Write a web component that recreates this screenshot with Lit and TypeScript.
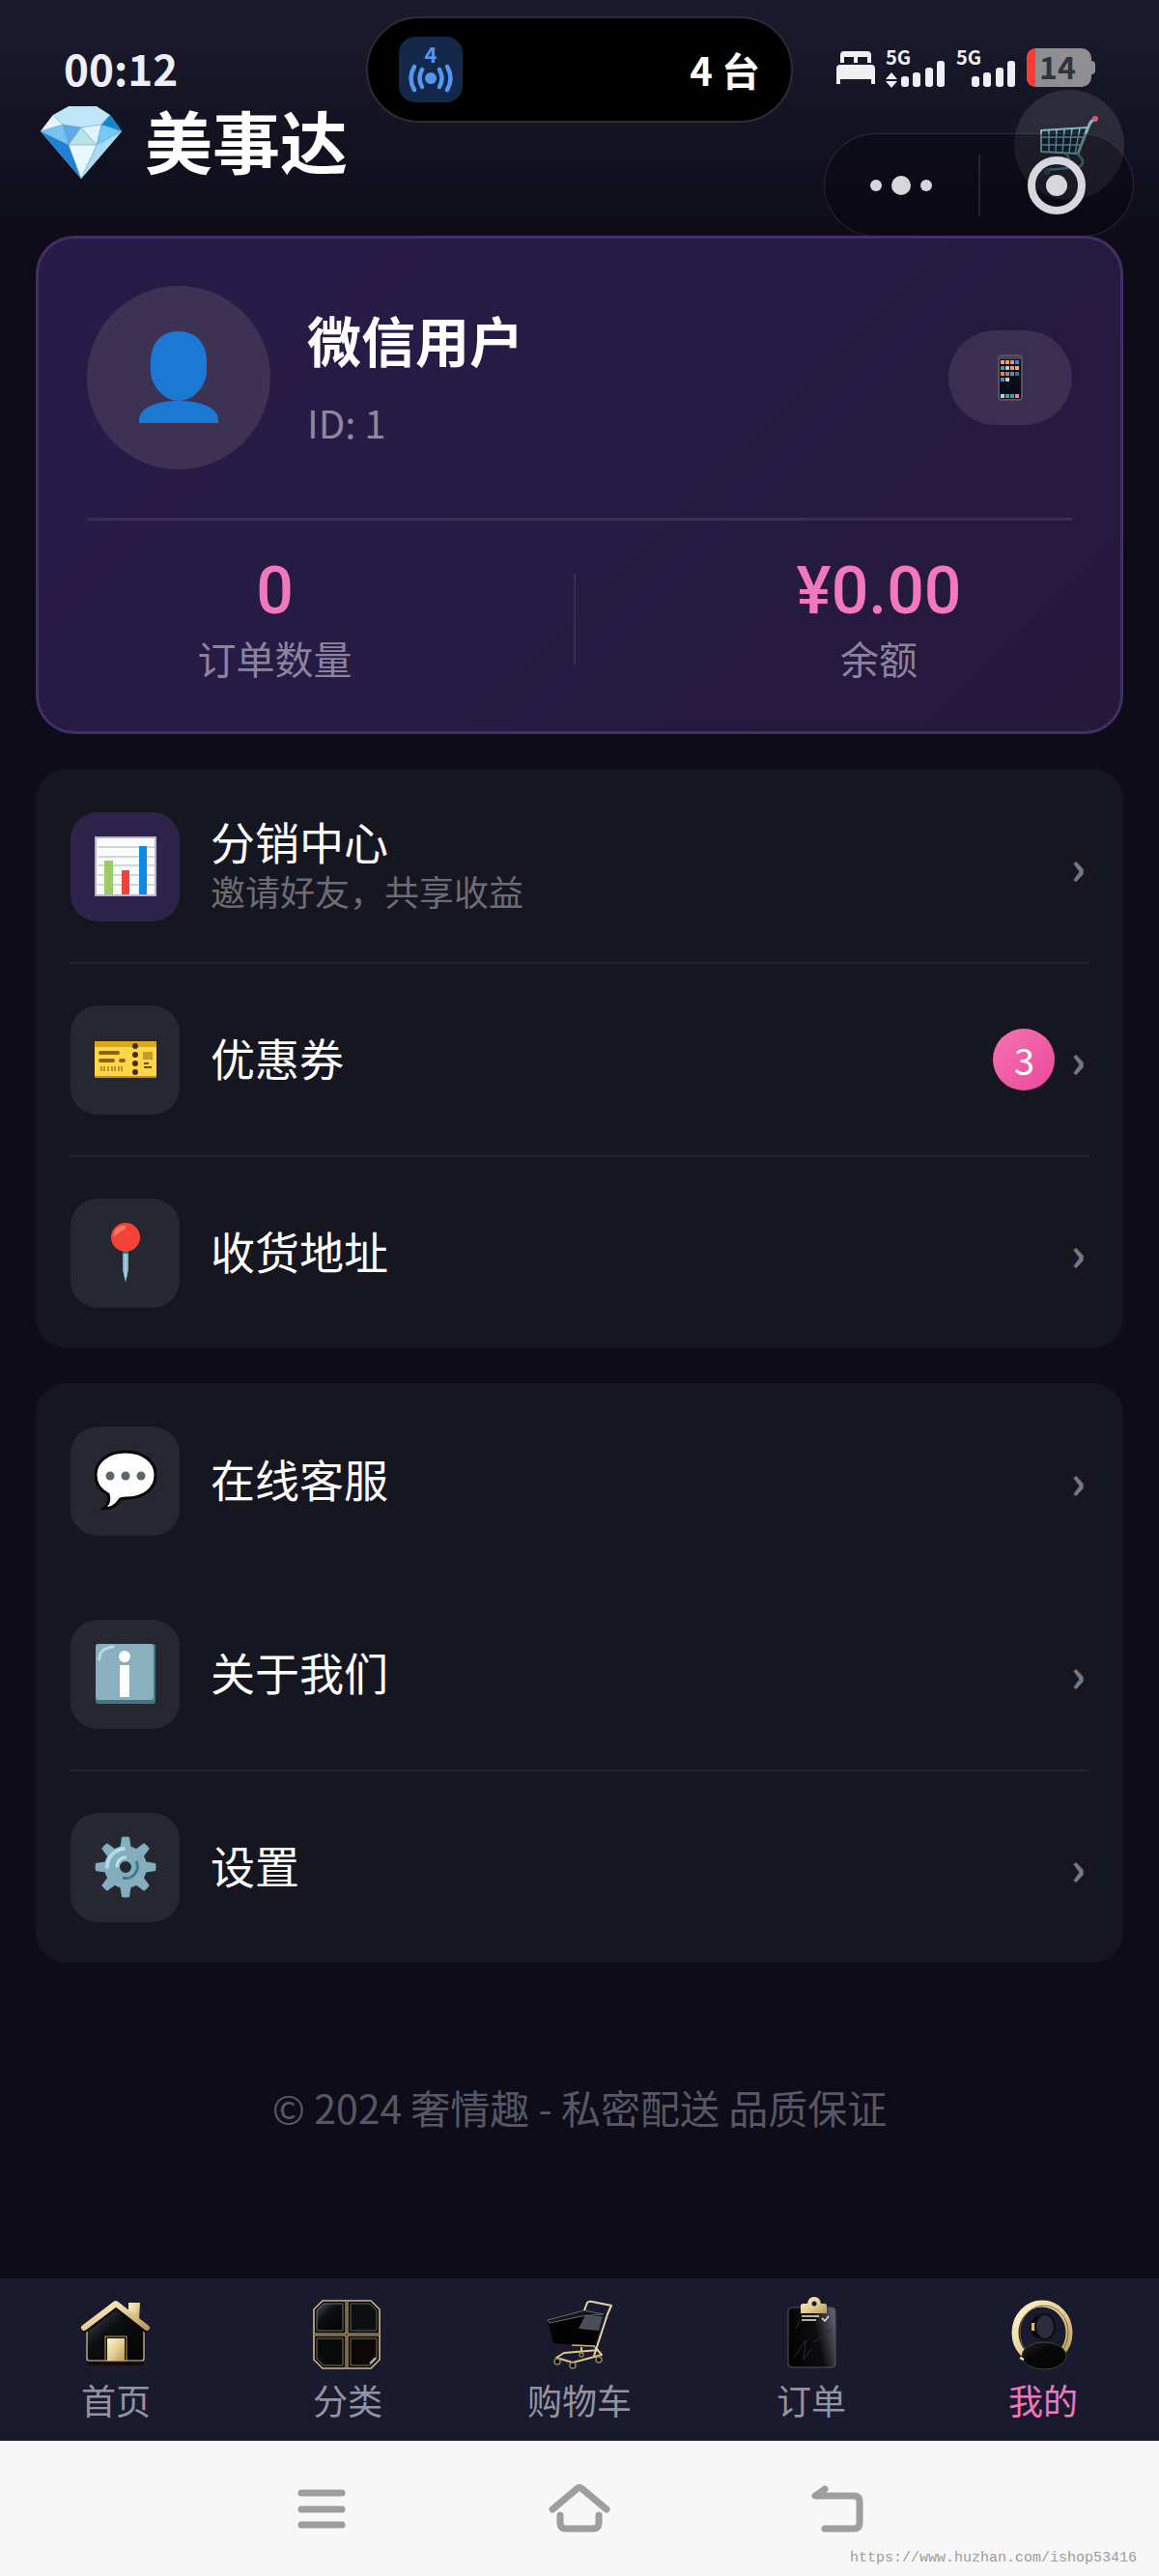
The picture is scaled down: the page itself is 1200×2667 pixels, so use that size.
import { LitElement, html, svg, css, nothing } from "lit";
import type { SVGTemplateResult } from "lit";
import { customElement, property } from "lit/decorators.js";
import { classMap } from "lit/directives/class-map.js";

/* ---------- shared artwork ---------- */

const gold = svg`
  <linearGradient id="gold" x1="0" y1="0" x2="1" y2="1">
    <stop offset="0" stop-color="#fff4d0"></stop>
    <stop offset="0.5" stop-color="#e6cf98"></stop>
    <stop offset="1" stop-color="#b8985a"></stop>
  </linearGradient>
  <linearGradient id="onyx" x1="0" y1="0" x2="1" y2="1">
    <stop offset="0" stop-color="#4a525c"></stop>
    <stop offset="0.4" stop-color="#0c0e12"></stop>
    <stop offset="1" stop-color="#030303"></stop>
  </linearGradient>`;

const chartIcon = svg`
  <rect x="1" y="2" width="62" height="60" fill="#fbfcfd" stroke="#b9b4c6" stroke-width="2"></rect>
  <path d="M3 12H62M3 22H62M3 31H62M3 41H62M3 51H62" stroke="#c3c9cf" stroke-width="1.5"></path>
  <rect x="10" y="26" width="9" height="35" fill="#9ccc65"></rect>
  <rect x="28" y="36" width="8" height="25" fill="#f44336"></rect>
  <rect x="46" y="11" width="8" height="50" fill="#0b8ae6"></rect>`;

const ticketIcon = svg`
  <rect x="0" y="13" width="64" height="38" rx="1" fill="#c98f14"></rect>
  <rect x="0" y="13" width="64" height="36" rx="1" fill="#fdd64b"></rect>
  <rect x="0" y="13" width="64" height="6" fill="#dba81c"></rect>
  <path d="M6 25H24M6 33H19M27 33H30" stroke="#8a6412" stroke-width="4" stroke-linecap="round"></path>
  <path d="M7 39V44M10 39V44M14 39V44M18 39V44M21 39V44M25 39V44M28 39V44" stroke="#a67c1a" stroke-width="1.5"></path>
  <rect x="50" y="24" width="10" height="8" fill="#c79a2c"></rect>
  <path d="M51 36H56M51 40H59" stroke="#6d4c0c" stroke-width="2"></path>
  <g fill="#4a2c12">
    <circle cx="42" cy="18" r="3"></circle><circle cx="42" cy="27" r="3"></circle>
    <circle cx="42" cy="36" r="3"></circle><circle cx="42" cy="45" r="3"></circle>
  </g>`;

const pinIcon = svg`
  <path d="M29 28H35V50L32 63L29 50Z" fill="#82aec0"></path>
  <path d="M29 28H35V33H29Z" fill="#2f7889"></path>
  <path d="M32 33V58" stroke="#b6d8e4" stroke-width="1.5"></path>
  <circle cx="32" cy="16" r="15" fill="#f44336"></circle>
  <path d="M20 16C19 9 25 3 32 4C34 8 25 9 20 16Z" fill="#ff7d6b"></path>`;

const bubbleIcon = svg`
  <path d="M32 2C50 2 63 12 63 26C63 41 50 50 33 50C29 50 26 50 25 53C22 58 16 61 9 61C14 57 16 52 14 46C6 42 1 35 1 26C1 12 14 2 32 2Z"
    fill="#fff" stroke="#060606" stroke-width="3"></path>
  <g fill="#5b666b">
    <circle cx="16" cy="27" r="4.5"></circle><circle cx="32" cy="27" r="4.5"></circle><circle cx="48" cy="27" r="4.5"></circle>
  </g>`;

const infoIcon = svg`
  <rect x="1" y="1" width="62" height="62" rx="3" fill="#407787"></rect>
  <rect x="1" y="1" width="60" height="58" rx="3" fill="#8ab0c0"></rect>
  <path d="M5 17C5 9 9 5 19 4" fill="none" stroke="#b5dcec" stroke-width="3" stroke-linecap="round"></path>
  <circle cx="31" cy="14" r="6" fill="#fff"></circle>
  <rect x="26" y="23" width="10" height="33" rx="1" fill="#fff"></rect>`;

const gearIcon = svg`
  <g fill="#84aebe">
    ${[0, 45, 90, 135, 180, 225, 270, 315].map(
      (a) => svg`<path d="M26 14L28 1Q32 0 36 1L38 14Z" transform="rotate(${a} 32 32)"></path>`
    )}
    <path fill-rule="evenodd" d="M32 10A22 22 0 1 0 32 54A22 22 0 1 0 32 10ZM32 26A6 6 0 1 1 32 38A6 6 0 1 1 32 26Z"></path>
  </g>
  <path d="M13 32A19 19 0 0 1 30 13" fill="none" stroke="#b0dcea" stroke-width="4" stroke-linecap="round"></path>
  <path d="M23 31A9 9 0 0 1 32 22" fill="none" stroke="#b8e2ee" stroke-width="3" stroke-linecap="round"></path>
  <path d="M43 26A12 12 0 0 1 29 43" fill="none" stroke="#3f7c90" stroke-width="3"></path>`;

const homeTab = svg`
  <defs>${gold}</defs>
  <path d="M49 3H61L60 22L49 14Z" fill="url(#gold)"></path>
  <path d="M6 68H65V63H6Z" fill="#130c08"></path>
  <path d="M6 29L36 9L65 29V61Q65 63 63 63H8Q6 63 6 61Z" fill="url(#onyx)" stroke="#d8cba6" stroke-width="1.2"></path>
  <path d="M3 33L36 8L68 33" fill="none" stroke="#0a0806" stroke-width="4"></path>
  <path d="M3 29L36 4L68 29" fill="none" stroke="url(#gold)" stroke-width="6" stroke-linecap="round" stroke-linejoin="round"></path>
  <rect x="25" y="38" width="22" height="25" fill="#151008" stroke="#b59a5c" stroke-width="1"></rect>
  <rect x="27" y="40" width="18" height="23" fill="url(#gold)"></rect>`;

const gridTab = svg`
  <defs>${gold}</defs>
  <path d="M10 1H60L69 10V62L60 71H10L1 62V10Z" fill="#080604" stroke="#cdbb92" stroke-width="1.6"></path>
  <path d="M35 1V71M1 36H69" stroke="#cdb98a" stroke-width="3"></path>
  <path d="M35 1V71M1 36H69" stroke="#2a2014" stroke-width="1"></path>
  <path d="M11 4H31V32H4V11Z" fill="url(#onyx)" stroke="#77726a"></path>
  <path d="M39 4H59L66 11V32H39Z" fill="#0c0f12" stroke="#66625a"></path>
  <path d="M4 40H31V68H11L4 61Z" fill="#090b0b" stroke="#7d725a"></path>
  <path d="M39 40H66V61L59 68H39Z" fill="#0d0807" stroke="#7d725a"></path>
  <path d="M59 66L65 60" stroke="#b8b4ac" stroke-width="2"></path>`;

const cartTab = svg`
  <defs>${gold}</defs>
  <path d="M38 49V56M52 49L59 57L29 65L12 60L20 55L56 52" fill="none" stroke="#d9c68f" stroke-width="2" stroke-linejoin="round"></path>
  <path d="M3 21L41 11L61 15L52 48L9 45Z" fill="#030303"></path>
  <path d="M42 16L60 17L56 32L35 30Z" fill="#4a4e58"></path>
  <path d="M3 21L41 11L61 15L38 17L5 24Z" fill="#14161b" stroke="#666a72" stroke-width="1"></path>
  <path d="M41 11L44 3Q46 1 49 2L69 6L65 15L51 58" fill="none" stroke="#e6d6a6" stroke-width="2" stroke-linejoin="round"></path>
  <path d="M28 47L52 48" stroke="#cbb67c" stroke-width="1.5"></path>
  <g fill="#0a0806" stroke="#94824f" stroke-width="1.5">
    <circle cx="13" cy="64" r="3"></circle><circle cx="29" cy="68" r="3"></circle>
    <circle cx="56" cy="62" r="3"></circle><circle cx="38" cy="57" r="2"></circle>
  </g>`;

const orderTab = svg`
  <defs>${gold}
    <linearGradient id="slate" x1="0" y1="0.6" x2="1" y2="0.3">
      <stop offset="0" stop-color="#030303"></stop>
      <stop offset="0.6" stop-color="#0d0d11"></stop>
      <stop offset="1" stop-color="#5d5b68"></stop>
    </linearGradient>
  </defs>
  <rect x="12" y="8" width="49" height="62" rx="4" fill="url(#slate)" stroke="#55535c" stroke-width="1"></rect>
  <path d="M18 60L30 42L28 62L37 50M20 30L24 22M38 44L58 30" fill="none" stroke="#2c2c33" stroke-width="1"></path>
  <path d="M26 17H44M26 21H41" stroke="#efe6cc" stroke-width="1.5"></path>
  <path d="M47 19L50 22L54 17" fill="none" stroke="#efe6cc" stroke-width="1.5"></path>
  <path d="M25 6Q25 4 28 4H32Q33 -3 39 -3Q45 -3 46 4H50Q52 4 52 6V14H25Z" fill="url(#gold)"></path>
  <circle cx="39" cy="4" r="2.5" fill="#1a1208"></circle>`;

const mineTab = svg`
  <defs>${gold}</defs>
  <ellipse cx="35" cy="34" rx="28" ry="30" fill="none" stroke="url(#gold)" stroke-width="7"></ellipse>
  <ellipse cx="37" cy="34" rx="25" ry="28" fill="none" stroke="#7a6130" stroke-width="1"></ellipse>
  <ellipse cx="32" cy="28" rx="9" ry="12" fill="#0b0b0f"></ellipse>
  <rect x="24" y="24" width="5" height="8" fill="#d8b983"></rect>
  <ellipse cx="38" cy="28" rx="10" ry="13" fill="#2a2d3b" stroke="#0c0c12" stroke-width="2"></ellipse>
  <ellipse cx="37" cy="58" rx="23" ry="14" fill="url(#onyx)"></ellipse>
  <ellipse cx="37" cy="58" rx="23" ry="14" fill="#050505" fill-opacity="0.6" stroke="#4c4636" stroke-width="1"></ellipse>
  <path d="M12 60L16 62" stroke="#f6e6b8" stroke-width="2"></path>`;

/* ---------- cellular signal ---------- */

@customElement("signal-meter")
class SignalMeter extends LitElement {
  @property({ type: Boolean }) active = false;

  static styles = css`
    :host { display: block; }
    svg { display: block; overflow: visible; }
    .tech {
      font: 700 20px "Noto Sans CJK SC", sans-serif;
    }
  `;

  render() {
    return html`<svg width="62" height="40" viewBox="0 0 62 40" fill="#edeef6">
      <text class="tech" x="0" y="17">5G</text>
      ${this.active
        ? svg`<path d="M6 25L12 32H0ZM0 34H12L6 41Z"></path>`
        : nothing}
      <rect x="16" y="29" width="8" height="11" rx="3"></rect>
      <rect x="28" y="25" width="8" height="15" rx="3"></rect>
      <rect x="41" y="20" width="8" height="20" rx="3"></rect>
      <rect x="53" y="13" width="8" height="27" rx="3"></rect>
    </svg>`;
  }
}

/* ---------- menu card ---------- */

interface MenuItem {
  title: string;
  note?: string;
  badge?: number;
  accent?: boolean;
  divider?: boolean;
  icon: SVGTemplateResult;
}

@customElement("menu-card")
class MenuCard extends LitElement {
  @property({ attribute: false }) items: MenuItem[] = [];

  static styles = css`
    :host {
      display: block;
      padding: 0 36px;
      border-radius: 32px;
      background: #161620;
    }
    .row {
      display: flex;
      align-items: center;
      gap: 32px;
      height: 200px;
      box-sizing: border-box;
      border-top: 2px solid transparent;
      color: #fff;
      text-decoration: none;
    }
    .divided { border-top-color: #23232d; }
    .tile {
      display: grid;
      place-items: center;
      flex: none;
      width: 113px;
      height: 113px;
      border-radius: 28px;
      background: #272731;
    }
    .accent { background: #2d234b; }
    .copy {
      display: flex;
      flex-direction: column;
      flex: 1;
      padding-bottom: 6px;
    }
    .title { font-size: 46px; line-height: 56px; }
    .note { font-size: 36px; line-height: 48px; color: #6c6c75; }
    .badge {
      display: grid;
      place-items: center;
      width: 64px;
      height: 64px;
      border-radius: 50%;
      background: linear-gradient(135deg, #f472b6, #ec4899);
      font-size: 38px;
      line-height: 1;
    }
    .end {
      display: flex;
      align-items: center;
      gap: 16px;
      padding-right: 3px;
    }
    .chevron {
      font-size: 48px;
      font-weight: 700;
      line-height: 52px;
      padding-bottom: 4px;
      color: #767680;
    }
  `;

  render() {
    return this.items.map(
      (item) => html`<a href="#" class=${classMap({ row: true, divided: !!item.divider })}>
        <span class=${classMap({ tile: true, accent: !!item.accent })}>
          <svg width="64" height="64" viewBox="0 0 64 64">${item.icon}</svg>
        </span>
        <span class="copy">
          <span class="title">${item.title}</span>
          ${item.note ? html`<span class="note">${item.note}</span>` : nothing}
        </span>
        <span class="end">
          ${item.badge ? html`<span class="badge">${item.badge}</span>` : nothing}
          <span class="chevron">›</span>
        </span>
      </a>`
    );
  }
}

/* ---------- page ---------- */

const services: MenuItem[] = [
  { title: "分销中心", note: "邀请好友，共享收益", accent: true, icon: chartIcon },
  { title: "优惠券", badge: 3, divider: true, icon: ticketIcon },
  { title: "收货地址", divider: true, icon: pinIcon },
];

const support: MenuItem[] = [
  { title: "在线客服", icon: bubbleIcon },
  { title: "关于我们", icon: infoIcon },
  { title: "设置", divider: true, icon: gearIcon },
];

const tabs = [
  { label: "首页", icon: homeTab },
  { label: "分类", icon: gridTab },
  { label: "购物车", icon: cartTab },
  { label: "订单", icon: orderTab },
  { label: "我的", icon: mineTab, active: true },
];

const phoneDots: [number, number, string][] = [
  [5, 8, "#e8a27c"], [10, 8, "#f0a63c"], [15, 8, "#e58aa8"], [20, 8, "#3f7fc0"],
  [5, 14, "#3fa39a"], [10, 14, "#9fd2e8"], [15, 14, "#f09a4c"], [20, 14, "#e8b48c"],
  [5, 20, "#f0823c"], [10, 20, "#d86a8a"], [15, 20, "#4a9a98"], [20, 20, "#3f6fa8"],
  [5, 26, "#4a86b8"], [10, 26, "#b8cfe6"],
  [5, 43, "#a8d4e8"], [10, 43, "#4aa0a8"], [15, 43, "#52a08a"], [20, 43, "#d88ab0"],
];

@customElement("app-root")
class AppRoot extends LitElement {
  static styles = css`
    :host {
      display: flex;
      flex-direction: column;
      position: relative;
      min-height: 100vh;
      background: linear-gradient(#1b1b2f 0, #0d0c18 244px) #0c0c17;
      color: #fff;
      font-family: "Noto Sans CJK SC", "Noto Sans", sans-serif;
    }
    svg { display: block; overflow: visible; }
    button {
      border: 0;
      padding: 0;
      background: none;
      color: inherit;
      font: inherit;
    }

    .status {
      display: flex;
      align-items: center;
      justify-content: space-between;
      position: relative;
      height: 76px;
      padding: 32px 66px 0;
    }
    .time { font-size: 44px; font-weight: 700; line-height: 56px; color: #edeef6; }
    .indicators { display: flex; align-items: center; gap: 11px; }
    .battery-level { font: 700 32px "Noto Sans CJK SC", sans-serif; }
    .island {
      display: flex;
      align-items: center;
      justify-content: space-between;
      position: absolute;
      top: 17px;
      left: 50%;
      transform: translateX(-50%);
      width: 442px;
      height: 110px;
      box-sizing: border-box;
      padding: 0 32px;
      border: 2px solid #2d2d31;
      border-radius: 55px;
      background: #000;
    }
    .hotspot-count { font: 700 22px "Noto Sans CJK SC", sans-serif; }
    .devices { font-size: 40px; font-weight: 700; line-height: 56px; }

    .header {
      display: flex;
      align-items: flex-start;
      height: 134px;
      padding: 2px 42px 0;
    }
    .brand {
      display: flex;
      align-items: flex-start;
      gap: 24px;
      margin: 0;
      font-size: 70px;
      font-weight: 700;
      line-height: 70px;
    }
    .cart {
      display: grid;
      place-items: center;
      position: absolute;
      top: 93px;
      right: 36px;
      width: 114px;
      height: 114px;
      border-radius: 50%;
      background: rgba(255, 255, 255, 0.1);
    }
    .capsule {
      display: flex;
      align-items: center;
      position: absolute;
      top: 138px;
      right: 26px;
      width: 321px;
      height: 107px;
      box-sizing: border-box;
      border: 1px solid rgba(255, 255, 255, 0.12);
      border-radius: 54px;
      background: rgba(4, 4, 12, 0.35);
    }
    .capsule button { display: grid; place-items: center; flex: 1; height: 64px; }
    .capsule button + button { border-left: 2px solid rgba(255, 255, 255, 0.1); }

    .content {
      display: flex;
      flex-direction: column;
      flex: 1;
      gap: 36px;
      padding: 0 37px;
    }
    .profile {
      position: relative;
      padding: 49px 50px;
      border: 3px solid #412f66;
      border-radius: 40px;
      background: linear-gradient(135deg, #281b4a, #261b43 50%, #25183b);
    }
    .user {
      display: flex;
      align-items: center;
      gap: 38px;
      padding-bottom: 50px;
      border-bottom: 3px solid #3a2f53;
    }
    .avatar {
      display: grid;
      place-items: center;
      width: 190px;
      height: 190px;
      border-radius: 50%;
      background: #3d3254;
    }
    .identity { display: flex; flex-direction: column; flex: 1; gap: 24px; }
    .name { margin: 0; font-size: 56px; font-weight: 700; line-height: 68px; }
    .uid { font-size: 40px; line-height: 56px; color: #8f869f; }
    .phone {
      display: grid;
      place-items: center;
      width: 128px;
      height: 98px;
      border-radius: 49px;
      background: #3a2f51;
    }
    .stats {
      display: flex;
      align-items: center;
      justify-content: space-around;
      padding-top: 35px;
    }
    .stat { display: flex; flex-direction: column; align-items: center; gap: 4px; }
    .amount {
      font-family: Roboto, "Noto Sans CJK SC", sans-serif;
      font-size: 68px;
      font-weight: 500;
      line-height: 76px;
      color: #f178bc;
    }
    .caption { font-size: 40px; line-height: 54px; color: #8d839c; }
    .rule { width: 2px; height: 94px; background: #3a2f51; }

    .copyright {
      margin: 81px 0 0;
      text-align: center;
      font-size: 41px;
      line-height: 64px;
      color: #575763;
    }

    .tabs {
      display: flex;
      height: 168px;
      box-sizing: border-box;
      padding-top: 22px;
      background: #1a1a2e;
    }
    .tab {
      display: flex;
      flex-direction: column;
      align-items: center;
      flex: 1;
      gap: 8px;
      color: #9592a1;
      font-size: 36px;
      line-height: 46px;
      text-decoration: none;
    }
    .active { color: #ee78bd; }

    .system {
      display: flex;
      align-items: center;
      position: relative;
      height: 140px;
      padding: 0 16.6667%;
      background: #f7f7f7;
    }
    .system button { display: grid; place-items: center; flex: 1; }
    .system svg { fill: none; stroke: #9e9e9e; stroke-width: 7; stroke-linecap: round; stroke-linejoin: round; }
    .watermark {
      position: absolute;
      right: 23px;
      bottom: 8px;
      font-family: "Liberation Mono", monospace;
      font-size: 15px;
      line-height: 20px;
      color: #9c9c9c;
    }
  `;

  private renderStatus() {
    return html`<div class="status">
      <span class="time">00:12</span>
      <div class="island">
        <svg width="66" height="68" viewBox="0 0 66 68" fill="#5596f3">
          <rect width="66" height="68" rx="17" fill="#14294a"></rect>
          <text class="hotspot-count" x="33" y="27" text-anchor="middle">4</text>
          <circle cx="33" cy="43" r="6"></circle>
          <path d="M24 34Q19 43 24 52M42 34Q47 43 42 52M16 31Q9 43 16 55M50 31Q57 43 50 55"
            fill="none" stroke="#5596f3" stroke-width="4.5" stroke-linecap="round"></path>
        </svg>
        <span class="devices">4 台</span>
      </div>
      <div class="indicators">
        <svg width="40" height="36" viewBox="0 0 40 36" fill="#f0f0f3">
          <path d="M4 13V5Q4 1 8 1H32Q36 1 36 5V13H32V7H22V13H18V7H8V13Z"></path>
          <path d="M0 35V19Q0 15 4 15H36Q40 15 40 19V35H36V30H4V35Z"></path>
        </svg>
        <signal-meter active></signal-meter>
        <signal-meter></signal-meter>
        <svg width="71" height="40" viewBox="0 0 71 40">
          <path d="M67 13Q71 13 71 17V23Q71 27 67 27Z" fill="#8e8e93"></path>
          <rect width="67" height="40" rx="10" fill="#8e8e93"></rect>
          <path d="M9 0V40Q0 39 0 30V10Q0 1 9 0Z" fill="#ff3b2f"></path>
          <text class="battery-level" x="32" y="32" text-anchor="middle" fill="#333337">14</text>
        </svg>
      </div>
    </div>`;
  }

  private renderHeader() {
    return html`<header class="header">
        <h1 class="brand">
          <svg width="84" height="76" viewBox="0 0 84 76">
            <path d="M29 0H58L72 9L84 26L42 75L0 26L13 9Z" fill="#bfe6f8"></path>
            <path d="M13 9L23 19L0 26Z" fill="#e6f5fc"></path>
            <path d="M72 9L84 26L63 19Z" fill="#0f88cf"></path>
            <path d="M0 26L23 19L29 40Z" fill="#76c4f2"></path>
            <path d="M23 19L42 22L29 40Z" fill="#5fa8ea"></path>
            <path d="M42 22L58 40H29Z" fill="#b5e5ea"></path>
            <path d="M42 22L63 19L58 40Z" fill="#dff5fd"></path>
            <path d="M63 19L84 26L58 40Z" fill="#74c8f6"></path>
            <path d="M0 26L29 40L42 75Z" fill="#1f80d6"></path>
            <path d="M29 40H58L42 75Z" fill="#e6f9fe"></path>
            <path d="M58 40L84 26L42 75Z" fill="#a9dcf2"></path>
            <path d="M13 9L23 19L42 22L63 19L72 9M0 26L23 19L29 40H58L63 19L84 26M29 40L42 22L58 40M0 26L29 40L42 75L58 40L84 26"
              fill="none" stroke="#5f93a8" stroke-width="0.5"></path>
          </svg>
          美事达
        </h1>
      </header>
      <button class="cart" aria-label="购物车">
        <svg width="64" height="64" viewBox="0 0 64 64" fill="none" stroke-linejoin="round">
          <path d="M3 17L51 14L41 41L3 39Z" fill="#102a38" stroke="#8ab5c0" stroke-width="2"></path>
          <path d="M11 17V39M19 16L18 40M27 16L25 40M35 15L32 40M43 15L38 41M3 24H48M3 32H45" stroke="#8ab5c0" stroke-width="1.5"></path>
          <path d="M41 41L52 13Q54 7 59 5" stroke="#8ab5c0" stroke-width="3" stroke-linecap="round"></path>
          <path d="M29 41L34 51M41 41L46 48Q47 54 41 55L8 58" stroke="#4d8790" stroke-width="2.5"></path>
          <circle cx="59" cy="5" r="3" fill="#e2596a"></circle>
          <circle cx="9" cy="60" r="3" fill="#35515a"></circle>
        </svg>
      </button>
      <div class="capsule">
        <button aria-label="更多">
          <svg width="64" height="20" viewBox="0 0 64 20" fill="#d6d6dc">
            <circle cx="6" cy="10" r="6"></circle>
            <circle cx="32" cy="10" r="10"></circle>
            <circle cx="58" cy="10" r="6"></circle>
          </svg>
        </button>
        <button aria-label="关闭">
          <svg width="60" height="60" viewBox="0 0 60 60">
            <circle cx="30" cy="30" r="26" fill="none" stroke="#d6d6dc" stroke-width="8"></circle>
            <circle cx="30" cy="30" r="11" fill="#d6d6dc"></circle>
          </svg>
        </button>
      </div>`;
  }

  private renderProfile() {
    return html`<section class="profile">
      <div class="user">
        <div class="avatar">
          <svg width="82" height="96" viewBox="0 0 82 96" fill="#1b78d3">
            <path d="M41 0C59 0 70 12 70 32V42C70 54 58 72 41 72C24 72 12 54 12 42V32C12 12 23 0 41 0Z"></path>
            <path d="M0 95V92C0 79 18 72 41 72C64 72 82 79 82 92V95Z"></path>
          </svg>
        </div>
        <div class="identity">
          <h2 class="name">微信用户</h2>
          <span class="uid">ID: 1</span>
        </div>
        <button class="phone" aria-label="绑定手机">
          <svg width="26" height="48" viewBox="0 0 26 48">
            <rect x="1" y="1" width="24" height="46" rx="3" fill="#0a0d18" stroke="#57525f" stroke-width="2"></rect>
            <path d="M2 2H24V5H2Z" fill="#47444f"></path>
            ${phoneDots.map(([x, y, c]) => svg`<rect x=${x - 2} y=${y - 2} width="4" height="4" fill=${c}></rect>`)}
          </svg>
        </button>
      </div>
      <div class="stats">
        <div class="stat"><span class="amount">0</span><span class="caption">订单数量</span></div>
        <span class="rule"></span>
        <div class="stat"><span class="amount">¥0.00</span><span class="caption">余额</span></div>
      </div>
    </section>`;
  }

  render() {
    return html`
      ${this.renderStatus()} ${this.renderHeader()}
      <main class="content">
        ${this.renderProfile()}
        <menu-card .items=${services}></menu-card>
        <menu-card .items=${support}></menu-card>
        <p class="copyright">© 2024 奢情趣 - 私密配送 品质保证</p>
      </main>
      <nav class="tabs">
        ${tabs.map(
          (tab) => html`<a href="#" class=${classMap({ tab: true, active: !!tab.active })}>
            <svg width="72" height="72" viewBox="0 0 72 72">${tab.icon}</svg>
            ${tab.label}
          </a>`
        )}
      </nav>
      <div class="system">
        <button aria-label="菜单">
          <svg width="50" height="48" viewBox="0 0 50 48"><path d="M4 8H46M4 25H46M4 41H46"></path></svg>
        </button>
        <button aria-label="主页">
          <svg width="64" height="48" viewBox="0 0 64 48">
            <path d="M4 25L29 4Q32 1 35 4L60 25M12 31V39Q12 45 18 45H46Q52 45 52 39V31"></path>
          </svg>
        </button>
        <button aria-label="返回">
          <svg width="54" height="48" viewBox="0 0 54 48">
            <path d="M14 4L4 11H44Q50 11 50 17V39Q50 45 44 45H14"></path>
          </svg>
        </button>
        <span class="watermark">https://www.huzhan.com/ishop53416</span>
      </div>
    `;
  }
}
